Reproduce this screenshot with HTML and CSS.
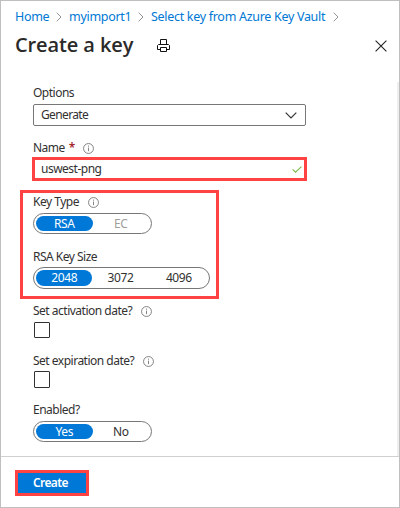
FILE: index.html
```html
<!DOCTYPE html>
<html lang="en">
<head>
<meta charset="utf-8">
<title>Create a key</title>
<link rel="stylesheet" href="styles.css">
</head>
<body>
<svg class="defs" width="0" height="0">
  <symbol id="info" viewBox="0 0 11 11"><circle cx="5.5" cy="5.5" r="4.95" fill="none" stroke="#777" stroke-width=".9"/><path d="M5.5 4.6v3.6M5.5 2.6v1.1" stroke="#777" stroke-width=".9"/></symbol>
  <symbol id="crumb" viewBox="0 0 6 10"><path d="M.7.7 5 5 .7 9.3" fill="none" stroke="#888" stroke-width=".9"/></symbol>
</svg>
<main class="panel">
  <nav class="crumbs">
    <a class="w-home">Home</a><svg><use href="#crumb"/></svg>
    <a class="w-import">myimport1</a><svg><use href="#crumb"/></svg>
    <a class="w-vault">Select key from Azure Key Vault</a><svg><use href="#crumb"/></svg>
  </nav>
  <header class="head">
    <h1>Create a key</h1>
    <svg class="print" viewBox="0 0 13 13" fill="none" stroke="#111" stroke-width="1"><path d="M3.5 5.5v-5h6v5M3.5 10.5h-3v-4l1-1h10l1 1v4h-3M3.5 8.5h6v4h-6z"/></svg>
    <svg class="close" viewBox="0 0 12 12"><path d="M.6.6l10.8 10.8M11.4.6.6 11.4" stroke="#222" stroke-width="1.1"/></svg>
  </header>
  <form class="form">
    <div class="label">Options</div>
    <div class="select"><span>Generate</span><svg viewBox="0 0 12 7"><path d="M.7.7 6 6 11.3.7" fill="none" stroke="#333" stroke-width="1.2"/></svg></div>
    <div class="label name"><span>Name</span><b>*</b><svg><use href="#info"/></svg></div>
    <div class="input"><span>uswest-png</span><svg viewBox="0 0 10 7"><path d="M.6 3.4 3.5 6.2 9.4.6" fill="none" stroke="#7fba4c" stroke-width="1.1"/></svg></div>
    <section class="marked">
      <div class="label"><span>Key Type</span><svg><use href="#info"/></svg></div>
      <div class="pills two"><span class="on">RSA</span><span class="off">EC</span></div>
      <div class="label size">RSA Key Size</div>
      <div class="pills three"><span class="on">2048</span><span>3072</span><span>4096</span></div>
    </section>
    <div class="label act"><span>Set activation date?</span><svg><use href="#info"/></svg></div>
    <div class="check"></div>
    <div class="label exp"><span>Set expiration date?</span><svg><use href="#info"/></svg></div>
    <div class="check tall"></div>
    <div class="label en">Enabled?</div>
    <div class="pills two"><span class="on">Yes</span><span>No</span></div>
  </form>
  <footer class="foot"><button type="button">Create</button></footer>
</main>
</body>
</html>
```

FILE: styles.css
```css
* { box-sizing: border-box; }
body { margin: 0; background: #fff; }
.defs { position: absolute; }
.panel {
  width: 400px; height: 508px;
  border: 1px solid #bfbfbf;
  display: flex; flex-direction: column;
  font: 12px/16px "Noto Sans", "Open Sans", sans-serif;
  color: #323130; white-space: nowrap;
}
.crumbs { display: flex; align-items: center; height: 16px; margin: 8px 0 0 14px; font-size: 12.5px; color: #0078d4; }
.crumbs svg { width: 6px; height: 10px; flex: none; margin: 0 7px 0 6px; }
.w-home { width: 35px; }
.w-import { width: 62px; margin-right: 1px; }
.w-vault { width: 176px; }
.crumbs a { letter-spacing: -.3px; }
.head { display: flex; align-items: center; height: 32px; margin: 4px 12px 0 14px; }
h1 { margin: 0; width: 142px; font: 600 20px/28px "Open Sans", "Noto Sans", sans-serif; letter-spacing: -.1px; color: #2b2a29; }
.print { width: 13px; height: 13px; margin-top: 1px; }
.close { width: 12px; height: 12px; margin-left: auto; margin-top: 1px; }
.form { height: 374px; margin: 21px 0 0; padding: 3px 0 0 32px; border-right: 2px solid #eee; }
.label { display: flex; align-items: center; height: 16px; letter-spacing: -.5px; }
.label svg { width: 11px; height: 11px; margin-left: 9px; flex: none; }
.label b { color: #a4262c; font-weight: 600; margin-left: 4px; width: 5px; }
.select { display: flex; align-items: center; justify-content: space-between; width: 273px; height: 22px; margin-top: 3px; padding: 0 8px 0 7px; border: 1px solid #777; border-radius: 2px; letter-spacing: -.63px; }
.select svg { width: 12px; height: 7px; }
.name { margin-top: 14px; }
.input { display: flex; align-items: center; justify-content: space-between; width: 275px; height: 24px; margin: 1px 0 0 -1px; padding: 0 2px 0 6px; border: 3px solid #ff4343; letter-spacing: -.5px; }
.input svg { width: 10px; height: 7px; margin-top: 1px; }
.marked { width: 199px; height: 109px; margin: 9px 0 0 -13px; padding: 1px 0 0 10px; border: 3px solid #ff4343; }
.pills { display: flex; height: 21px; padding: 2px; margin-top: 3px; border: 1px solid #777; border-radius: 11px; line-height: 16px; text-align: center; }
.pills span { flex: 1; border-radius: 8px; letter-spacing: -.4px; }
.pills .on { background: #0078d7; color: #fff; }
.pills .off { color: #a19f9d; }
.two { width: 119px; }
.three { width: 177px; height: 22px; margin-top: 2px; }
.three span:last-child { padding-left: 2px; }
.size { margin-top: 15px; }
.act { margin-top: 4px; }
.check { width: 16px; height: 16px; margin: 3px 0 0 1px; border: 1px solid #323130; border-radius: 1px; }
.tall { height: 17px; margin-top: 2px; }
.exp { margin-top: 15px; }
.en { margin-top: 14px; }
.foot { flex: 1; border-top: 1px solid #d0d0d0; padding: 13px 0 0 14px; }
button { display: block; width: 74px; height: 26px; padding: 0 3px 0 0; border: 3px solid #ff4343; background: #0078d7; color: #fff; font: 600 12px/18px "Noto Sans", sans-serif; letter-spacing: -.6px; }
```
